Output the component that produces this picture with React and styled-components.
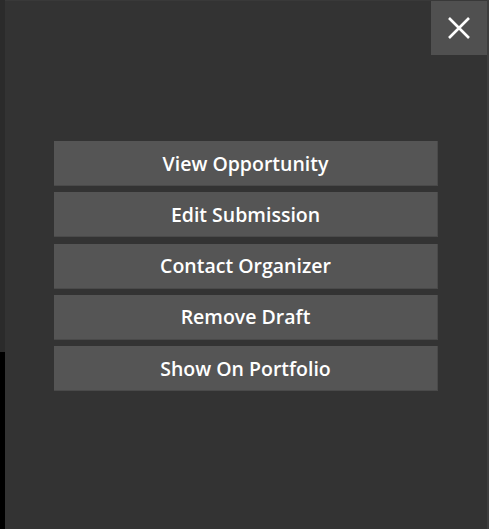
import React from 'react';
import styled, { createGlobalStyle } from 'styled-components';

const GlobalStyle = createGlobalStyle`
  html, body {
    margin: 0;
    padding: 0;
    height: 100%;
  }
  body {
    background: linear-gradient(to bottom, #2b2b2b 0, #2b2b2b 352px, #000 352px);
    font-family: 'Open Sans', 'Liberation Sans', sans-serif;
    overflow: hidden;
  }
`;

const actions = [
  'View Opportunity',
  'Edit Submission',
  'Contact Organizer',
  'Remove Draft',
  'Show On Portfolio',
];

export default function App() {
  return (
    <>
      <GlobalStyle />
      <Screen>
        <Panel>
          <Header>
            <CloseButton aria-label="Close">
              <svg width="24" height="24" viewBox="0 0 24 24">
                <path d="M2 2 L22 22 M22 2 L2 22" stroke="#fff" strokeWidth="2.6" fill="none" />
              </svg>
            </CloseButton>
          </Header>
          <ActionList>
            {actions.map((label) => (
              <ActionButton key={label}>{label}</ActionButton>
            ))}
          </ActionList>
        </Panel>
        <Scrollbar />
      </Screen>
    </>
  );
}

const Screen = styled.div`
  display: flex;
  width: 489px;
  height: 529px;
  padding-left: 5px;
  box-sizing: border-box;
`;

const Panel = styled.div`
  width: 482px;
  height: 529px;
  background: #333333;
  border-top: 1px solid #393939;
  box-sizing: border-box;
`;

const Scrollbar = styled.div`
  width: 2px;
  height: 529px;
  background: #3e3e3e;
`;

const Header = styled.div`
  display: flex;
  justify-content: flex-end;
`;

const CloseButton = styled.button`
  width: 56px;
  height: 54px;
  border: none;
  padding: 0;
  background: #505050;
  display: flex;
  align-items: center;
  justify-content: center;
  cursor: pointer;
`;

const ActionList = styled.div`
  display: flex;
  flex-direction: column;
  gap: 6.25px;
  padding: 86px 49px 0;
`;

const ActionButton = styled.button`
  height: 45px;
  box-sizing: border-box;
  background: #555555;
  border: none;
  border-right: 1px solid #4a4a4a;
  border-bottom: 1px solid #4a4a4a;
  color: #fff;
  font-family: 'Open Sans', 'Liberation Sans', sans-serif;
  font-weight: 600;
  font-size: 19.5px;
  cursor: pointer;
`;
